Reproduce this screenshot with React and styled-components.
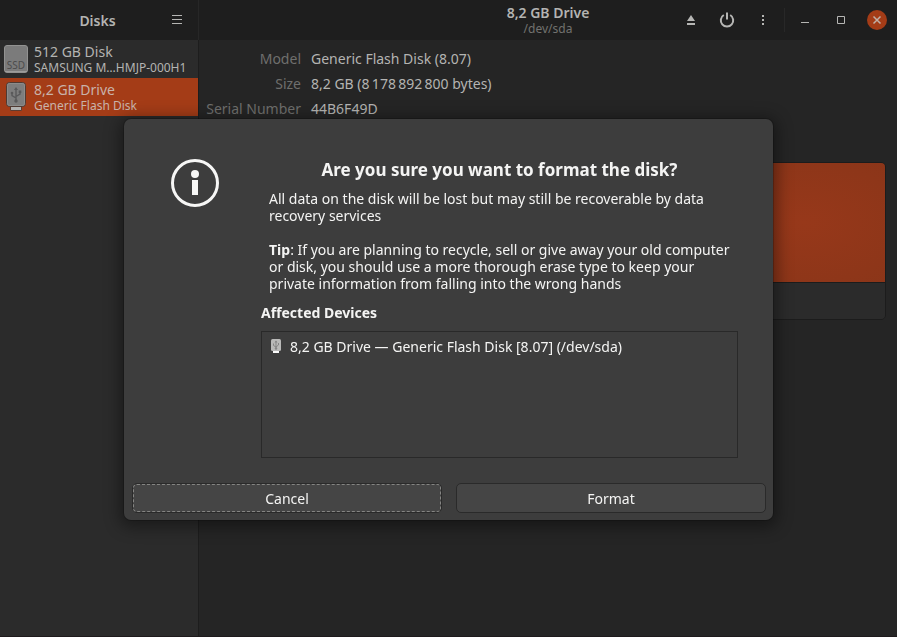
import React from "react";
import styled, { createGlobalStyle } from "styled-components";

const GlobalStyle = createGlobalStyle`
  *, *::before, *::after { box-sizing: border-box; }
  body {
    margin: 0;
    background: #252525;
    color: #b4b4b2;
    font: 14px/17px "Noto Sans", "Open Sans", sans-serif;
  }
  button { font: inherit; color: inherit; }
  h1, h2, h3, p, dl, dd, ul { margin: 0; padding: 0; }
`;

const Window = styled.div`
  display: grid;
  grid-template-columns: 199px 1fr;
  grid-template-rows: 40px 1fr;
  min-height: 100vh;
  border-bottom: 1px solid #1e1a1c;
`;

const SideHeader = styled.header`
  display: grid;
  grid-template-columns: 36px 1fr 36px;
  align-items: center;
  padding: 0 3px 0 0;
  background: #1e1e1e;
  border-right: 1px solid #272727;
`;

const Title = styled.h1`
  font-size: 14px;
  line-height: 17px;
  font-weight: 600;
  text-align: center;
`;

const MainHeader = styled.header`
  display: grid;
  grid-template-columns: 1fr auto 1fr;
  align-items: center;
  padding: 0 2px;
  background: #1e1e1e;
`;

const Heading = styled.div`
  grid-column: 2;
  text-align: center;
  padding-bottom: 1px;
`;

const Subtitle = styled.div`
  font-size: 12px;
  line-height: 15px;
  color: #72726f;
`;

const HeaderTools = styled.div`
  display: flex;
  justify-content: flex-end;
  align-items: center;
`;

const Divider = styled.span`
  width: 1px;
  height: 24px;
  margin: 0 2px 0 3px;
  background: #282828;
`;

const IconButton = styled.button`
  display: grid;
  place-items: center;
  width: 36px;
  height: 36px;
  padding: 0;
  border: 0;
  background: none;
`;

const Sidebar = styled.nav`
  background: #2b2b2b;
  border-right: 1px solid #1d1d1d;
`;

const DeviceList = styled.ul`
  list-style: none;
`;

const DeviceRow = styled.button`
  display: flex;
  align-items: center;
  gap: 6px;
  width: 100%;
  height: 38px;
  padding: 0 4px;
  border: 0;
  text-align: left;
  background: ${(p) => (p.$selected ? "#a43c17" : "transparent")};
  color: ${(p) => (p.$selected ? "#c9b3aa" : "#b4b4b2")};
`;

const DeviceText = styled.span`
  display: flex;
  flex-direction: column;
  white-space: nowrap;
`;

const DeviceDetail = styled.span`
  font-size: 12px;
  line-height: 15px;
`;

const Main = styled.main`
  padding: 10px 11px 12px 6px;
`;

const Facts = styled.dl`
  display: grid;
  grid-template-columns: 96px 1fr;
  column-gap: 10px;
  row-gap: 8px;
`;

const FactName = styled.dt`
  text-align: right;
  color: #6f6f6d;
  white-space: nowrap;
`;

const Volumes = styled.section`
  margin: 45px 0 0 6px;
  border: 1px solid #1c1c1c;
  border-radius: 5px;
  overflow: hidden;
`;

const VolumeMap = styled.div`
  height: 120px;
  border-bottom: 1px solid #1c1c1c;
  background: radial-gradient(ellipse 200px 120px at 88% 50%, #97381a, #853418);
`;

const VolumeBar = styled.div`
  height: 36px;
  background: #2b2b2b;
`;

const Overlay = styled.div`
  position: fixed;
  inset: 0;
  display: flex;
  align-items: center;
  justify-content: center;
  padding: 2px 0 0;
`;

const Dialog = styled.section`
  width: 649px;
  max-width: 100%;
  padding: 40px 7px 7px 8px;
  border-radius: 7px;
  background: #3d3d3d;
  color: #f4f4f3;
  box-shadow: 0 3px 16px 4px rgba(0, 0, 0, 0.4), 0 0 0 1px rgba(0, 0, 0, 0.2);
`;

const DialogBody = styled.div`
  display: grid;
  grid-template-columns: 48px 1fr;
  gap: 42px;
  padding: 0 28px 0 39px;
`;

const DialogTitle = styled.h2`
  font-size: 17px;
  line-height: 22px;
  font-weight: 700;
  text-align: center;
`;

const Message = styled.div`
  display: grid;
  gap: 17px;
  padding: 9px 0 0 8px;
`;

const SectionTitle = styled.h3`
  margin: 12px 0 10px;
  font-size: 14px;
  line-height: 17px;
  font-weight: 700;
`;

const AffectedList = styled.ul`
  height: 127px;
  padding: 6px 7px;
  border: 1px solid #292929;
  list-style: none;
`;

const AffectedItem = styled.li`
  display: flex;
  align-items: center;
  gap: 7px;
`;

const Actions = styled.div`
  display: grid;
  grid-template-columns: 1fr 1fr;
  gap: 14px;
  margin-top: 25px;
`;

const ActionButton = styled.button`
  height: 30px;
  padding: 0 16px;
  border: 1px solid #2a2a2a;
  border-radius: 5px;
  background: #454545;
  outline: none;

  &:focus {
    outline: 1px dashed #858583;
    outline-offset: -2px;
  }
`;

function UsbTrident() {
  return (
    <g fill="none" stroke="#59595a" strokeWidth="1.4">
      <path d="M12 7v12M12 16l-4-2.500v-2.500M12 14.500l4-2.500v-2.500" />
      <path d="M12 5l-2 3h4z" fill="#59595a" stroke="none" />
      <circle cx="12" cy="19" r="1.700" fill="#59595a" stroke="none" />
      <circle cx="8" cy="11" r="1.300" fill="#59595a" stroke="none" />
      <path d="M14.700 8.500h2.600v2.600h-2.600z" fill="#59595a" stroke="none" />
    </g>
  );
}

function SsdIcon() {
  return (
    <svg width="24" height="30" viewBox="0 0 24 30" aria-hidden="true">
      <rect x="0.500" y="1.500" width="23" height="27" rx="2.500" fill="#7b7b7b" stroke="#929291" />
      <path d="M1 27.500h22" stroke="#9c9c9b" />
      <text x="12" y="25" textAnchor="middle" fontSize="10" fontFamily="Noto Sans, sans-serif" fill="#4c4c4c">SSD</text>
    </svg>
  );
}

function UsbIcon() {
  return (
    <svg width="24" height="30" viewBox="0 0 24 30" aria-hidden="true">
      <path d="M6.500 24.500h11v4h-11z" fill="#b2b2b1" stroke="#5c3c30" />
      <rect x="2.500" y="0.500" width="19" height="24" rx="3" fill="#7d7d7d" stroke="#4f3a33" />
      <rect x="3.500" y="1.500" width="17" height="22" rx="2" fill="none" stroke="#8c8c8b" />
      <UsbTrident />
    </svg>
  );
}

function SmallUsbIcon() {
  return (
    <svg width="14" height="16" viewBox="0 0 14 16" aria-hidden="true">
      <path d="M4 12h6v2H4z" fill="#fafafa" />
      <rect x="2" y="0" width="10" height="12" rx="1.500" fill="#b9b9b8" />
      <path d="M7 2v8M4.500 4.500v2L7 8 9.500 6V4" fill="none" stroke="#858585" />
      <path d="M5.500 3.500L7 1.500l1.500 2z" fill="#858585" />
      <circle cx="7" cy="9.500" r="1.200" fill="#858585" />
    </svg>
  );
}

function InfoIcon() {
  return (
    <svg width="48" height="48" viewBox="0 0 48 48" aria-hidden="true">
      <circle cx="24" cy="24" r="22.500" fill="none" stroke="#f7f7f6" strokeWidth="3" />
      <circle cx="24" cy="15" r="4" fill="#f7f7f6" />
      <path d="M21 21h6v15h-6z" fill="#f7f7f6" />
    </svg>
  );
}

function Glyph({ children, size = 16 }) {
  return (
    <svg width={size} height={size} viewBox={`0 0 ${size} ${size}`} fill="#b6b6b4" aria-hidden="true">
      {children}
    </svg>
  );
}

const devices = [
  { name: "512 GB Disk", detail: "SAMSUNG M…HMJP-000H1", Icon: SsdIcon },
  { name: "8,2 GB Drive", detail: "Generic Flash Disk", Icon: UsbIcon, selected: true },
];

const facts = [
  ["Model", "Generic Flash Disk (8.07)"],
  ["Size", "8,2 GB (8\u2009178\u2009892\u2009800 bytes)"],
  ["Serial Number", "44B6F49D"],
];

export default function App() {
  return (
    <>
      <GlobalStyle />
      <Window>
        <SideHeader>
          <span />
          <Title>Disks</Title>
          <IconButton aria-label="Menu">
            <Glyph><path d="M3 3h10v1H3zM3 7h10v1H3zM3 11h10v1H3z" /></Glyph>
          </IconButton>
        </SideHeader>
        <MainHeader>
          <Heading>
            <Title as="h2">8,2 GB Drive</Title>
            <Subtitle>/dev/sda</Subtitle>
          </Heading>
          <HeaderTools>
            <IconButton aria-label="Eject">
              <Glyph><path d="M8 3l4 6H4zM4 11h8v2H4z" /></Glyph>
            </IconButton>
            <IconButton aria-label="Power off">
              <Glyph>
                <path d="M4.800 3A6.200 6.200 0 1 0 11.200 3" fill="none" stroke="#b6b6b4" strokeWidth="2" />
                <path d="M7 0.500h2v7H7z" />
              </Glyph>
            </IconButton>
            <IconButton aria-label="Drive options">
              <Glyph><path d="M7 3h2v2H7zM7 7h2v2H7zM7 11h2v2H7z" /></Glyph>
            </IconButton>
            <Divider />
            <IconButton aria-label="Minimize">
              <Glyph><path d="M4 10h8v1H4z" /></Glyph>
            </IconButton>
            <IconButton aria-label="Maximize">
              <Glyph><path d="M4.500 4.500h7v7h-7z" fill="none" stroke="#b6b6b4" /></Glyph>
            </IconButton>
            <IconButton aria-label="Close">
              <Glyph size={20}>
                <circle cx="10" cy="10" r="10" fill="#a43c17" />
                <path d="M6.500 6.500l7 7M13.500 6.500l-7 7" stroke="#c0b0a8" strokeWidth="1.500" />
              </Glyph>
            </IconButton>
          </HeaderTools>
        </MainHeader>
        <Sidebar aria-label="Devices">
          <DeviceList>
            {devices.map(({ name, detail, Icon, selected }) => (
              <li key={name}>
                <DeviceRow $selected={selected} aria-current={selected}>
                  <Icon />
                  <DeviceText>
                    <span>{name}</span>
                    <DeviceDetail>{detail}</DeviceDetail>
                  </DeviceText>
                </DeviceRow>
              </li>
            ))}
          </DeviceList>
        </Sidebar>
        <Main>
          <Facts>
            {facts.map(([name, value]) => (
              <React.Fragment key={name}>
                <FactName>{name}</FactName>
                <dd>{value}</dd>
              </React.Fragment>
            ))}
          </Facts>
          <Volumes aria-label="Volumes">
            <VolumeMap />
            <VolumeBar />
          </Volumes>
        </Main>
      </Window>
      <Overlay>
        <Dialog role="alertdialog" aria-modal="true" aria-labelledby="dialog-title">
          <DialogBody>
            <InfoIcon />
            <div>
              <DialogTitle id="dialog-title">Are you sure you want to format the disk?</DialogTitle>
              <Message>
                <p>All data on the disk will be lost but may still be recoverable by data recovery services</p>
                <p>
                  <b>Tip</b>: If you are planning to recycle, sell or give away your old computer or disk, you
                  should use a more thorough erase type to keep your private information from falling into the
                  wrong hands
                </p>
              </Message>
              <SectionTitle>Affected Devices</SectionTitle>
              <AffectedList>
                <AffectedItem>
                  <SmallUsbIcon />
                  8,2 GB Drive — Generic Flash Disk [8.07] (/dev/sda)
                </AffectedItem>
              </AffectedList>
            </div>
          </DialogBody>
          <Actions>
            <ActionButton autoFocus>Cancel</ActionButton>
            <ActionButton>Format</ActionButton>
          </Actions>
        </Dialog>
      </Overlay>
    </>
  );
}
